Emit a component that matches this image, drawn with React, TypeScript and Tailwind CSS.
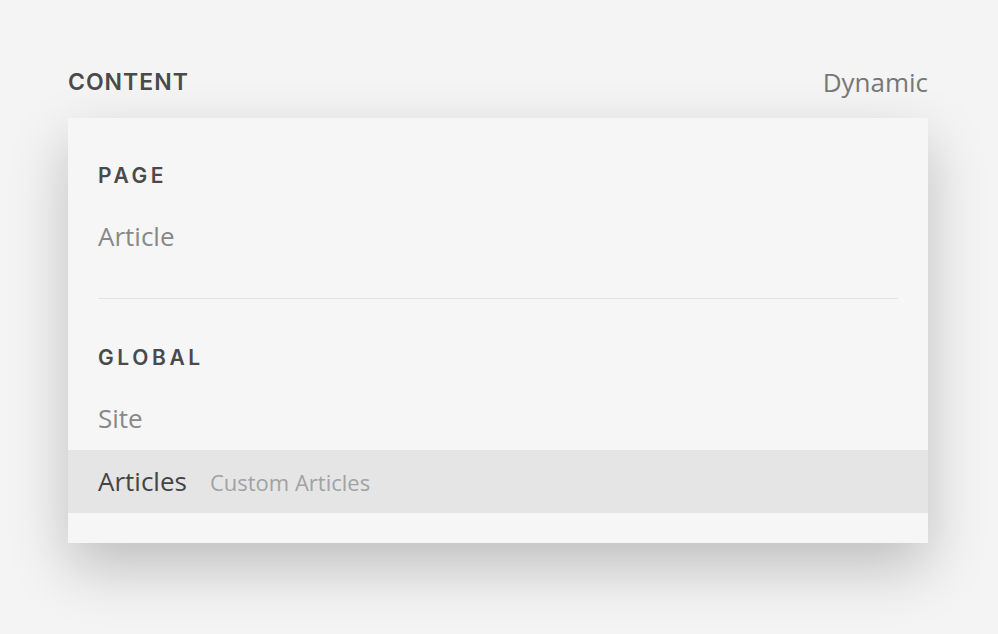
import React from "react"

const heading = "font-['Inter',sans-serif] font-semibold text-[#4a4a4a] uppercase"
const body = "font-['Open_Sans',sans-serif]"

function Section({ title, children, divider }: { title: string; children: React.ReactNode; divider?: boolean }) {
  return (
    <div>
      <div className="pt-[46px] mb-[17px] px-[30px]">
        <div className={`${heading} text-[21px] leading-[24px] tracking-[3.6px]`}>{title}</div>
      </div>
      {children}
      <div className="h-[30px]" />
      {divider && <div className="mx-[30px] mb-px h-px bg-[#e3e3e3]" />}
    </div>
  )
}

function Row({ label, note, active }: { label: string; note?: string; active?: boolean }) {
  return (
    <div className={`h-[63px] px-[30px] flex items-center gap-[23px] ${body} ${active ? "bg-[#e5e5e5]" : ""}`}>
      <span className={`text-[26px] leading-[32px] -mt-[2px] ${active ? "text-[#444]" : "text-[#888]"}`}>{label}</span>
      {note && <span className="text-[22px] leading-[28px] text-[#a2a2a2]">{note}</span>}
    </div>
  )
}

export default function App() {
  return (
    <div className="min-h-[634px] w-full bg-[#f4f4f4] px-[68px] pr-[70px] pt-[67px]">
      <div className="flex items-center justify-between h-[30px]">
        <div className={`${heading} text-[23px] leading-[30px] tracking-[1px]`}>Content</div>
        <div className={`${body} text-[26px] leading-[30px] text-[#777]`}>Dynamic</div>
      </div>
      <div className="mt-[21px] bg-[#f6f6f6] shadow-[0_24px_55px_rgba(0,0,0,0.22)]">
        <Section title="Page" divider>
          <Row label="Article" />
        </Section>
        <Section title="Global">
          <Row label="Site" />
          <Row label="Articles" note="Custom Articles" active />
        </Section>
      </div>
    </div>
  )
}
